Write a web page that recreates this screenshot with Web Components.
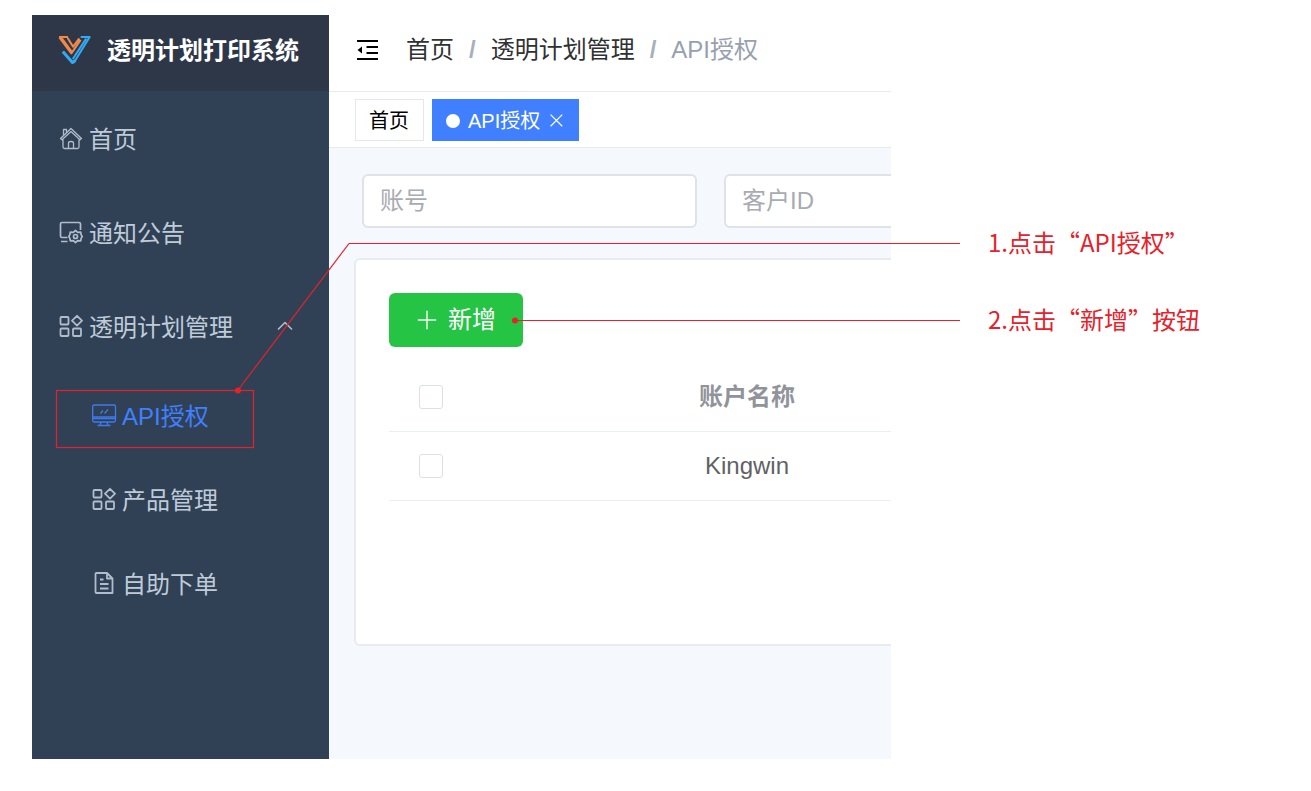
<!DOCTYPE html>
<html lang="zh-CN">
<head>
<meta charset="utf-8">
<title>透明计划打印系统</title>
<style>
  body {
    margin: 0;
    background: #fff;
    font-family: "Liberation Sans", "Noto Sans CJK SC", sans-serif;
    font-size: 24px;
    line-height: 32px;
  }
</style>
</head>
<body>
<guide-page>
  <app-shell slot="app">
    <side-menu slot="side" heading="透明计划打印系统">
      <menu-entry icon="home">首页</menu-entry>
      <menu-entry icon="notice">通知公告</menu-entry>
      <menu-entry icon="grid" open>透明计划管理</menu-entry>
      <menu-entry icon="monitor" sub active>API授权</menu-entry>
      <menu-entry icon="grid" sub>产品管理</menu-entry>
      <menu-entry icon="doc" sub>自助下单</menu-entry>
    </side-menu>
    <top-bar></top-bar>
    <tab-strip></tab-strip>
    <filter-bar></filter-bar>
    <account-card></account-card>
  </app-shell>
  <guide-note slot="notes">1.点击“API授权”</guide-note>
  <guide-note slot="notes">2.点击“新增”按钮</guide-note>
</guide-page>

<script>
const icons = {
  home: `<path d="M1.500 12.500 12 2.500l10.500 10-1.500 1.300-9-8.300-9 8.300zM4 13.500V21q0 1.500 1.500 1.500h13q1.500 0 1.500-1.500v-7.500M4.500 9.500V3.500h3v3M9.500 22.500V17q0-1.500 2.500-1.500t2.500 1.500v5.500"/>`,
  notice: `<g stroke-width="1.700"><path d="M4 17.500H3q-1.500 0-1.500-1.500V4Q1.500 2.500 3 2.500h17Q21.500 2.500 21.500 4v6M2 21.500h6.500M4 17.500h4.500"/><path d="m16.500 10.500 2.200 1.800 3-.2.500 2.800 1 1.600-1 1.600-.5 2.800-3-.2-2.200 1.800-2.200-1.800-3 .2-.5-2.800-1-1.600 1-1.600.5-2.800 3 .2z"/><circle cx="16.500" cy="16.500" r="2"/></g>`,
  grid: `<g stroke-width="1.800"><rect x="1.500" y="3" width="8" height="7.500" rx="1"/><rect x="1.500" y="14.500" width="8" height="7.500" rx="1"/><rect x="14" y="14.500" width="8" height="7.500" rx="1"/><path d="m18 1.800 5 4.900-5 4.900-5-4.900z"/></g>`,
  monitor: `<rect x=".7" y="2" width="22.800" height="17" rx="1.500"/><path d="M1 14h22.500M1 15.700h22.500M9 19l-1 3.500M15 19l1 3.500M5.500 22.500h13M8.500 10.500l2.500-3M12.500 10.500l3.500-4"/>`,
  doc: `<g stroke-width="1.800"><path d="M4.500 2H15l5.500 5.500V22h-16q-1 0-1-1V3q0-1 1-1zM15 2v5.500h5.500"/><path d="M8 8.500h3.500M8 13h8.500M8 17.500h8.500"/></g>`,
  up: `<path d="m5 15.500 7-7 7 7" stroke-width="1.600"/>`,
  fold: `<g stroke-width="2"><path d="M1 3h21M10.500 9H22M10.500 15H22M1 21h21"/></g><path d="M1.500 12 6 8.500v7z" fill="currentColor" stroke="none"/>`,
  close: `<path d="m1 1 20 20M21 1 1 21" stroke-width="2"/>`,
  plus: `<path d="M12 2v20M2 12h20" stroke-width="1.500"/>`,
  logo: `<g stroke-width="1.500"><path stroke="#f08a4b" d="M7 2.200 11 8.500l4.500-6M.8 1.500h6.500M1 1.800l8.700 11.500L16.500 3.500" /><path stroke="#f08a4b" d="M2.500 2l7.500 10.300" /><path stroke="#33aaf2" d="M16.500 1.500H23L11.500 20.200M20.500 2.500 10.800 17.500"/><path stroke="#33aaf2" stroke-width="2.200" d="M3.500 12 10.500 20 12.500 18.500"/></g>`
};

class UiIcon extends HTMLElement {
  constructor() {
    super();
    this.attachShadow({ mode: 'open' });
  }

  connectedCallback() {
    this.shadowRoot.innerHTML = `
      <style>
        :host { display: block; flex: none; width: var(--size, 24px); height: var(--size, 24px); }
        svg { display: block; width: 100%; height: 100%; overflow: visible; }
      </style>
      <svg viewBox="0 0 24 24" fill="none" stroke="currentColor" stroke-width="1.300" stroke-linejoin="round" aria-hidden="true">${icons[this.getAttribute('name')]}</svg>
    `;
  }
}
customElements.define('ui-icon', UiIcon);


class MenuEntry extends HTMLElement {
  constructor() {
    super();
    this.attachShadow({ mode: 'open' });
  }

  connectedCallback() {
    const isGroup = this.hasAttribute('open');
    const tag = isGroup ? 'button' : 'a';
    const attrs = isGroup ? 'type="button" aria-expanded="true"' : 'href="#"';
    this.shadowRoot.innerHTML = `
      <style>
        :host { display: block; color: #bfcbd9; }
        :host([active]) { color: #4080ff; }
        a, button {
          display: flex;
          align-items: center;
          gap: 6px;
          box-sizing: border-box;
          width: 100%;
          height: 94px;
          padding: 0 32px 0 27px;
          border: 0;
          background: none;
          color: inherit;
          font: inherit;
          text-align: left;
          text-decoration: none;
          white-space: nowrap;
        }
        :host([sub]) a { height: 84px; padding-left: 60px; }
        ui-icon { opacity: .9; }
        span { flex: 1; padding-top: 4px; }
      </style>
      <${tag} ${attrs}>
        <ui-icon name="${this.getAttribute('icon')}"></ui-icon>
        <span><slot></slot></span>
        ${isGroup ? '<ui-icon name="up"></ui-icon>' : ''}
      </${tag}>
    `;
  }
}
customElements.define('menu-entry', MenuEntry);


class SideMenu extends HTMLElement {
  constructor() {
    super();
    this.attachShadow({ mode: 'open' });
    this.shadowRoot.innerHTML = `
      <style>
        :host { display: block; background: #304156; }
        header {
          display: flex;
          align-items: center;
          gap: 16px;
          height: 76px;
          padding: 0 0 4px 26px;
          box-sizing: border-box;
          background: #2d3748;
          color: #fff;
          white-space: nowrap;
        }
        header ui-icon { --size: 33px; }
        h1 { margin: 0; font-size: 24px; line-height: 32px; }
      </style>
      <header><ui-icon name="logo"></ui-icon><h1></h1></header>
      <nav><slot></slot></nav>
    `;
  }

  connectedCallback() {
    this.shadowRoot.querySelector('h1').innerText = this.getAttribute('heading');
  }
}
customElements.define('side-menu', SideMenu);


class TopBar extends HTMLElement {
  constructor() {
    super();
    this.attachShadow({ mode: 'open' });
    this.shadowRoot.innerHTML = `
      <style>
        :host {
          display: flex;
          align-items: center;
          gap: 26px;
          box-sizing: border-box;
          height: 77px;
          padding: 0 0 6px 27px;
          border-bottom: 1px solid #e6e9f1;
          background: #fff;
          white-space: nowrap;
        }
        button { padding: 0; border: 0; background: none; color: #000; }
        nav { display: flex; gap: 15px; color: #97a0ae; }
        a { color: #303133; text-decoration: none; }
        b { color: #a9afba; }
      </style>
      <button type="button" aria-label="折叠菜单"><ui-icon name="fold"></ui-icon></button>
      <nav>
        <a href="#">首页</a><b>/</b><a href="#">透明计划管理</a><b>/</b><span>API授权</span>
      </nav>
    `;
  }
}
customElements.define('top-bar', TopBar);


class TabStrip extends HTMLElement {
  constructor() {
    super();
    this.attachShadow({ mode: 'open' });
    this.shadowRoot.innerHTML = `
      <style>
        :host {
          display: flex;
          align-items: center;
          gap: 8px;
          box-sizing: border-box;
          height: 56px;
          padding: 0 0 0 26px;
          border-bottom: 1px solid #e6e9f1;
          background: #fff;
          font-size: 20px;
        }
        .tab {
          display: flex;
          align-items: center;
          box-sizing: border-box;
          height: 42px;
          padding: 2px 14px 0 13px;
          border: 1px solid #e4e7ef;
          color: #000;
          white-space: nowrap;
        }
        .active { border-color: #4080ff; background: #4080ff; color: #fff; }
        .active::before { content: ""; width: 14px; height: 14px; margin-right: 8px; border-radius: 50%; background: #fff; }
        a { color: inherit; text-decoration: none; }
        button { margin-left: 10px; padding: 0; border: 0; background: none; color: inherit; }
        ui-icon { --size: 14px; }
      </style>
      <div class="tab"><a href="#">首页</a></div>
      <div class="tab active"><a href="#">API授权</a><button type="button" aria-label="关闭"><ui-icon name="close"></ui-icon></button></div>
    `;
  }
}
customElements.define('tab-strip', TabStrip);


class FilterBar extends HTMLElement {
  constructor() {
    super();
    this.attachShadow({ mode: 'open' });
    this.shadowRoot.innerHTML = `
      <style>
        :host { display: flex; gap: 27px; padding: 26px 0 30px 33px; }
        input {
          flex: none;
          box-sizing: border-box;
          width: 335px;
          height: 54px;
          padding: 0 16px;
          border: 2px solid #dfe2e9;
          border-radius: 6px;
          background: #fff;
          font: inherit;
        }
        input::placeholder { color: #a8abb2; opacity: 1; }
      </style>
      <input type="text" placeholder="账号" aria-label="账号">
      <input type="text" placeholder="客户ID" aria-label="客户ID">
    `;
  }
}
customElements.define('filter-bar', FilterBar);


class AccountCard extends HTMLElement {
  constructor() {
    super();
    this.attachShadow({ mode: 'open' });
    this.shadowRoot.innerHTML = `
      <style>
        :host {
          display: block;
          box-sizing: border-box;
          min-height: 388px;
          margin-left: 25px;
          padding: 33px 0 0 33px;
          border: 2px solid #e8ebf2;
          border-right: 0;
          border-radius: 6px 0 0 6px;
          background: #fff;
          overflow: hidden;
        }
        button {
          display: flex;
          align-items: center;
          gap: 10px;
          height: 54px;
          padding: 0 27px;
          border: 0;
          border-radius: 6px;
          background: #25c445;
          color: #fff;
          font: inherit;
        }
        button ui-icon { --size: 22px; }
        table { width: 632px; margin-top: 16px; border-collapse: collapse; table-layout: fixed; }
        th, td { height: 68px; padding: 0; border-bottom: 1px solid #ebeef5; text-align: center; color: #606266; }
        th { color: #909399; }
        .check { width: 84px; }
        input {
          display: block;
          appearance: none;
          box-sizing: border-box;
          width: 24px;
          height: 24px;
          margin: 0 auto;
          border: 1px solid #dcdfe6;
          border-radius: 3px;
          background: #fff;
        }
      </style>
      <button type="button"><ui-icon name="plus"></ui-icon>新增</button>
      <table>
        <thead>
          <tr><th class="check"><input type="checkbox" aria-label="全选"></th><th>账户名称</th></tr>
        </thead>
        <tbody>
          <tr><td><input type="checkbox" aria-label="Kingwin"></td><td>Kingwin</td></tr>
        </tbody>
      </table>
    `;
  }
}
customElements.define('account-card', AccountCard);


class AppShell extends HTMLElement {
  constructor() {
    super();
    this.attachShadow({ mode: 'open' });
    this.shadowRoot.innerHTML = `
      <style>
        :host {
          display: grid;
          grid-template-columns: 297px minmax(0, 1fr);
          min-height: calc(100vh - 47px);
          background: #f5f8fd;
          overflow: hidden;
        }
        main { min-width: 0; overflow: hidden; }
      </style>
      <slot name="side"></slot>
      <main><slot></slot></main>
    `;
  }
}
customElements.define('app-shell', AppShell);


class GuideNote extends HTMLElement {
  constructor() {
    super();
    this.attachShadow({ mode: 'open' });
    this.shadowRoot.innerHTML = `
      <style>
        :host { display: flex; align-items: center; height: 77px; white-space: nowrap; }
        p { margin: 0; }
      </style>
      <p><slot></slot></p>
    `;
  }
}
customElements.define('guide-note', GuideNote);


class GuidePage extends HTMLElement {
  constructor() {
    super();
    this.attachShadow({ mode: 'open' });
    this.shadowRoot.innerHTML = `
      <style>
        :host {
          display: grid;
          grid-template-columns: minmax(0, 1fr) 323px;
          column-gap: 97px;
          position: relative;
          padding: 15px 0 32px 32px;
        }
        aside {
          padding-top: 188px;
          color: #e6212a;
          font-family: "Noto Sans CJK SC", sans-serif;
        }
        /* leader lines, drawn over the app and ending just before the notes */
        .leaders {
          position: absolute;
          top: 0;
          left: 0;
          width: calc(100% - 351px);
          height: 100%;
          pointer-events: none;
        }
      </style>
      <slot name="app"></slot>
      <aside><slot name="notes"></slot></aside>
      <svg class="leaders" stroke="#e6212a" stroke-width="1.200" fill="none" aria-hidden="true">
        <rect x="56.5" y="390.5" width="197" height="57"/>
        <line x1="238" y1="390" x2="349" y2="243.5"/>
        <line x1="349" y1="243.5" x2="100%" y2="243.5"/>
        <line x1="515" y1="320.500" x2="100%" y2="320.500"/>
        <circle cx="238" cy="390.500" r="3" fill="#e6212a" stroke="none"/>
        <circle cx="515" cy="320.500" r="3" fill="#e6212a" stroke="none"/>
      </svg>
    `;
  }
}
customElements.define('guide-page', GuidePage);
</script>
</body>
</html>
